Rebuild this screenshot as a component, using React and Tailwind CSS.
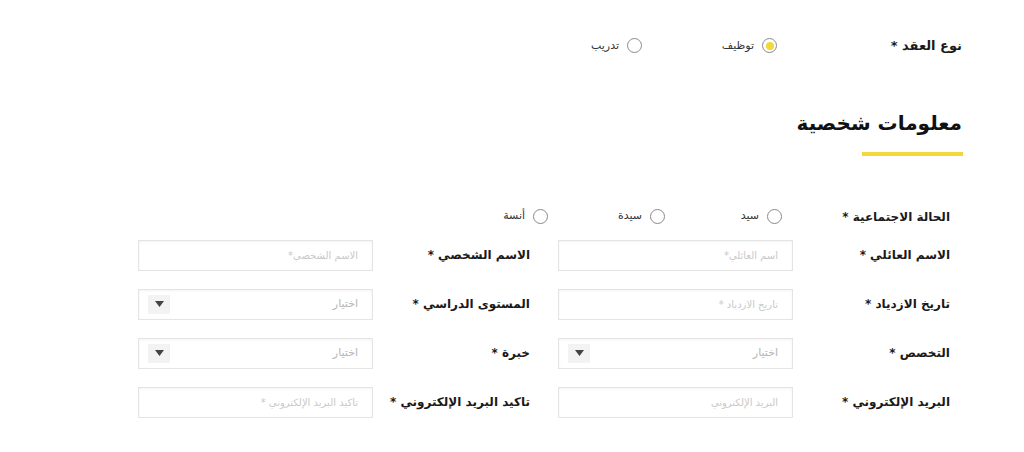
import React from "react";

const font = { fontFamily: '"DejaVu Sans", "Noto Sans", sans-serif' };

function Radio({ checked, label, w }) {
  return (
    <div className={`flex items-center gap-[8px] ${w}`}>
      <span className="flex h-[15px] w-[15px] shrink-0 items-center justify-center rounded-full border border-[#8a8a8a] bg-white">
        {checked && <span className="h-[8px] w-[8px] rounded-full bg-[#f2d83b]" />}
      </span>
      <span className="text-[11px] text-[#333]">{label}</span>
    </div>
  );
}

function TextInput({ placeholder }) {
  return (
    <div className="flex h-[31px] w-[235px] items-center border border-[#e4e4e4] bg-white px-[14px] shadow-[inset_0_1px_3px_rgba(0,0,0,0.05)]">
      <span className="text-[10px] text-[#c9c9c9]">{placeholder}</span>
    </div>
  );
}

function SelectInput() {
  return (
    <div className="flex h-[31px] w-[235px] items-center justify-between border border-[#e4e4e4] bg-white pr-[14px] pl-[9px] shadow-[inset_0_1px_3px_rgba(0,0,0,0.05)]">
      <span className="text-[11px] text-[#b5b5b5]">اختيار</span>
      <span className="flex h-[19px] w-[22px] items-center justify-center bg-[#f3f3f3]">
        <svg width="9" height="6" viewBox="0 0 9 6">
          <path d="M0 0 L9 0 L4.5 6 Z" fill="#444" />
        </svg>
      </span>
    </div>
  );
}

function Field({ label, children }) {
  return (
    <div className="flex items-center">
      <div className="w-[157px] text-[12px] font-bold text-[#1a1a1a]">{label}</div>
      {children}
    </div>
  );
}

export default function App() {
  return (
    <div dir="rtl" style={font} className="h-[452px] w-[1024px] overflow-hidden bg-white">
      <div className="pr-[61px]">
        <div className="flex items-center pt-[36px]">
          <div className="w-[186px] pr-[1px] text-[13px] font-bold text-[#1a1a1a]">نوع العقد *</div>
          <Radio checked label="توظيف" w="w-[135px]" />
          <Radio label="تدريب" w="w-[135px]" />
        </div>

        <div className="pt-[52px]">
          <div className="pr-[1px] text-[20px] font-bold leading-[30px] text-[#111]">معلومات شخصية</div>
          <div className="mt-[14px] h-[4px] w-[101px] bg-[#f2d83b]" />
        </div>
      </div>

      <div className="pr-[74px] pt-[52px]">
        <div className="flex items-center">
          <div className="w-[168px] text-[12px] font-bold text-[#1a1a1a]">الحالة الاجتماعية *</div>
          <Radio label="سيد" w="w-[117px]" />
          <Radio label="سيدة" w="w-[117px]" />
          <Radio label="أنسة" w="w-[117px]" />
        </div>

        <div className="mt-[14px] flex flex-col gap-[18px]">
          <div className="flex gap-[28px]">
            <Field label="الاسم العائلي *"><TextInput placeholder="اسم العائلي*" /></Field>
            <Field label="الاسم الشخصي *"><TextInput placeholder="الاسم الشخصي*" /></Field>
          </div>
          <div className="flex gap-[28px]">
            <Field label="تاريخ الازدياد *"><TextInput placeholder="تاريخ الازدياد *" /></Field>
            <Field label="المستوى الدراسي *"><SelectInput /></Field>
          </div>
          <div className="flex gap-[28px]">
            <Field label="التخصص *"><SelectInput /></Field>
            <Field label="خبرة *"><SelectInput /></Field>
          </div>
          <div className="flex gap-[28px]">
            <Field label="البريد الإلكتروني *"><TextInput placeholder="البريد الإلكتروني" /></Field>
            <Field label="تاكيد البريد الإلكتروني *"><TextInput placeholder="تاكيد البريد الإلكتروني *" /></Field>
          </div>
        </div>
      </div>
    </div>
  );
}
